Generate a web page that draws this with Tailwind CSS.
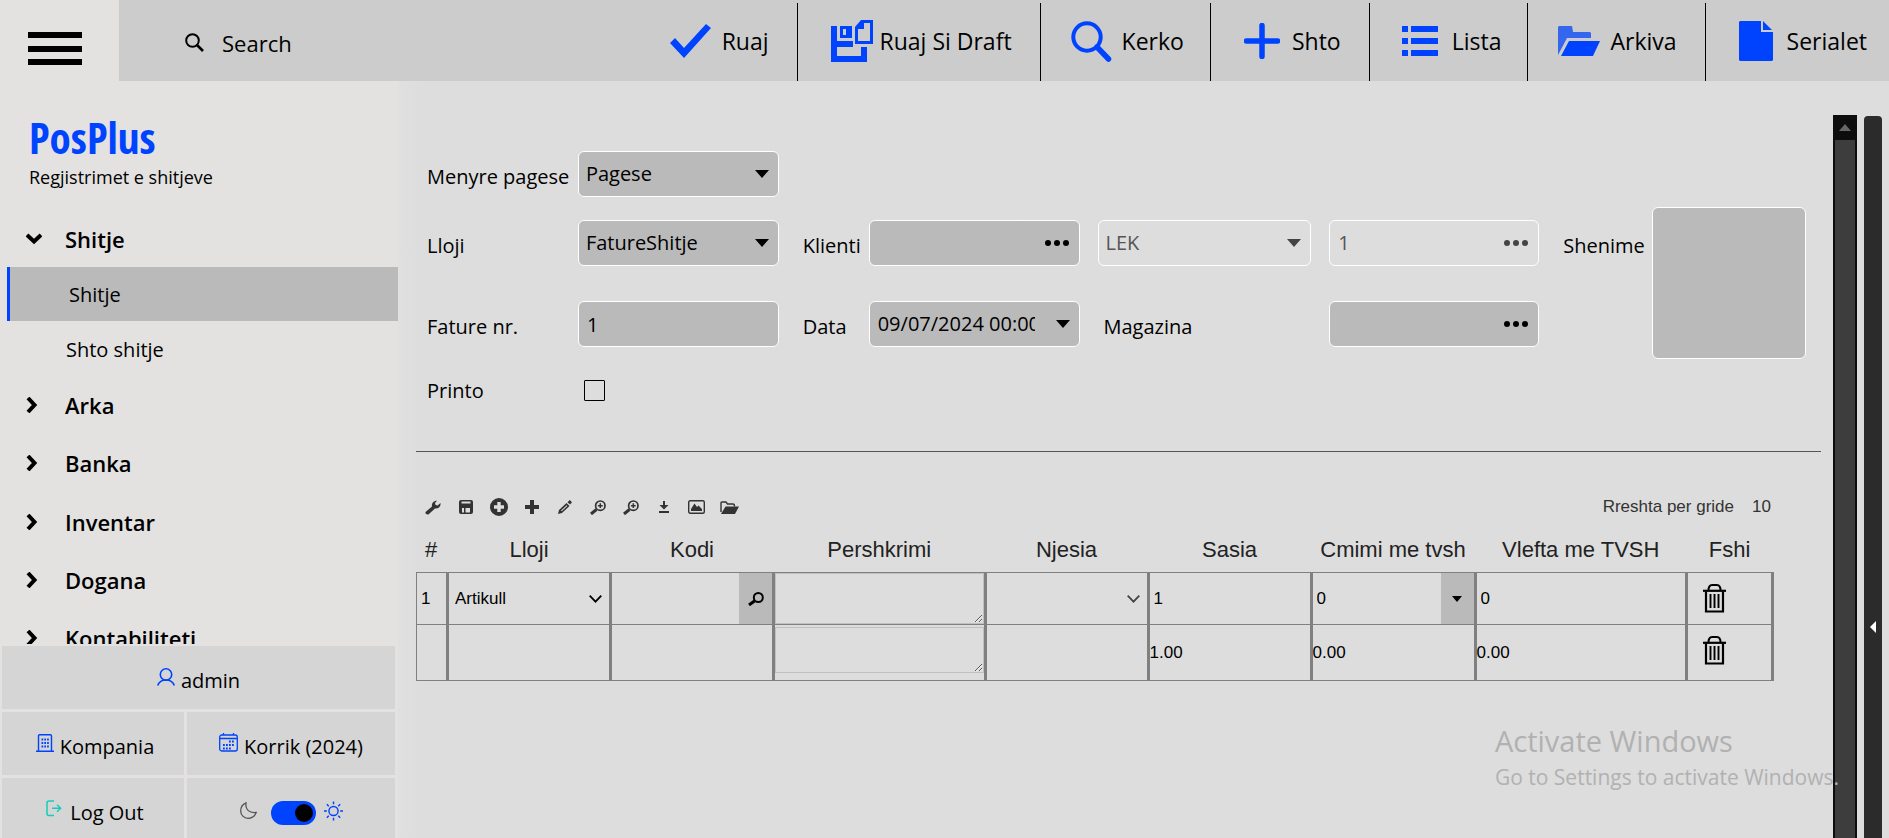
<!DOCTYPE html>
<html lang="sq">
<head>
    <meta charset="UTF-8">
    <meta name="viewport" content="width=device-width, initial-scale=1.0">
    <title>PosPlus - Regjistrimet e shitjeve</title>
    <script src="https://cdn.jsdelivr.net/npm/@tailwindcss/browser@4"></script>
</head>
<body class="h-screen overflow-hidden flex flex-col bg-[#dddddd] text-black text-[20px] leading-7 font-['Open_Sans','Noto_Sans',sans-serif]">

    <!-- Header -->
    <header class="h-[81px] shrink-0 flex bg-[#cccccc]">
        <button type="button" aria-label="Menu" class="w-[119px] bg-[#e3e2e0] pl-7 pt-4">
            <svg width="54" height="34" viewBox="0 0 54 34"><path d="M0 0h54v6H0zM0 14h54v6H0zM0 27h54v6H0z"/></svg>
        </button>
        <label class="flex items-center gap-[18px] pl-[66px] pt-1">
            <svg width="19" height="19" viewBox="0 0 19 19" fill="none" stroke="#000" stroke-width="2"><circle cx="7.5" cy="7.5" r="6.3"/><path d="M12 12l6 6" stroke-width="2.6"/></svg>
            <input type="search" placeholder="Search" class="w-40 bg-transparent text-[22px] outline-none placeholder:text-black">
        </label>
        <nav class="ml-auto flex pt-[3px] text-[23px]">
            <button type="button" class="flex items-center gap-2.5 pl-8 pr-7 pb-0.5">
                <svg width="42" height="34" viewBox="0 0 42 34"><path d="M0 19l5-5 9 10L36 0l5 4-27 30z" fill="#0043ff"/></svg>
                Ruaj
            </button>
            <button type="button" class="flex items-center gap-1.5 border-l border-black pl-[33px] pr-7 pb-0.5">
                <svg width="43" height="43" viewBox="0 0 43 43" fill="#0043ff"><path fill-rule="evenodd" d="M0 6h6v15h16v6H6v9h24v-9h6v15H0zM9 6h12v12H9zM12 9v6h3V9z"/><path fill-rule="evenodd" d="M30 0h12v24H24V7zM33 3v6h-6v12h12V3z"/></svg>
                Ruaj Si Draft
            </button>
            <button type="button" class="flex items-center gap-2.5 border-l border-black pl-[30px] pr-[26px] pb-0.5">
                <svg width="41" height="41" viewBox="0 0 41 41" fill="none" stroke="#0043ff"><circle cx="16" cy="16" r="13.7" stroke-width="4"/><path d="M26 26l11.500 12" stroke-width="5.500" stroke-linecap="round"/></svg>
                Kerko
            </button>
            <button type="button" class="flex items-center gap-3 border-l border-black pl-[33px] pr-7 pb-0.5">
                <svg width="36" height="36" viewBox="0 0 36 36"><path d="M18 2.500v31M2.500 18h31" stroke="#0043ff" stroke-width="5.500" stroke-linecap="round"/></svg>
                Shto
            </button>
            <button type="button" class="flex items-center gap-3.5 border-l border-black pl-8 pr-[26px] pb-0.5">
                <svg width="36" height="30" viewBox="0 0 36 30" fill="#0043ff"><path d="M0 0h6v6H0zM9 0h27v6H9zM0 12h6v6H0zM9 12h27v6H9zM0 24h6v6H0zM9 24h27v6H9z"/></svg>
                Lista
            </button>
            <button type="button" class="flex items-center gap-2.5 border-l border-black pl-[30px] pr-7 pb-0.5">
                <svg width="42" height="30" viewBox="0 0 42 30"><path d="M1 0h13l1 6h17l1 1v5H9L0 29V1z" fill="#3566ee"/><path d="M11 15h31l-7 15H3z" fill="#0043ff"/></svg>
                Arkiva
            </button>
            <button type="button" class="flex items-center gap-3.5 border-l border-black pl-[33px] pr-[22px] pb-0.5">
                <svg width="34" height="40" viewBox="0 0 34 40" fill="#0043ff"><path d="M1 0h21v11h12v28l-1 1H1l-1-1V1zM24 0l9 9h-9z"/></svg>
                Serialet
            </button>
        </nav>
    </header>

    <div class="flex flex-1 min-h-0">

        <!-- Sidebar -->
        <aside class="w-[398px] shrink-0 flex flex-col bg-[#e3e2e0]">
            <div class="pl-[29px] pt-7">
                <h1 class="text-[43px] leading-[58px] font-bold text-[#0043ff] font-['Open_Sans_Condensed','Liberation_Sans_Narrow','Open_Sans',sans-serif]">PosPlus</h1>
                <p class="text-[18px] leading-5">Regjistrimet e shitjeve</p>
            </div>
            <nav class="flex-1 min-h-0 overflow-hidden mt-6 mb-0.5">
                <a href="#" class="flex items-center h-[56px] pl-[26px] text-[22px] font-semibold"><svg class="mr-[23px]" width="16" height="12" viewBox="0 0 16 12" fill="none" stroke="#000" stroke-width="4"><path d="M1 2l7 6.500L15 2"/></svg>Shitje</a>
                <a href="#" class="flex items-center h-[54px] ml-[7px] border-l-[3px] border-[#0043ff] bg-[#bababa] pl-[59px] pt-0.5">Shitje</a>
                <a href="#" class="flex items-center h-[55px] pl-[66px] pt-0.5">Shto shitje</a>
                <a href="#" class="flex items-center h-[58px] pl-[26px] text-[22px] font-semibold"><svg class="mr-[27px]" width="12" height="16" viewBox="0 0 12 16" fill="none" stroke="#000" stroke-width="4"><path d="M2 1l6.500 7L2 15"/></svg>Arka</a>
                <a href="#" class="flex items-center h-[58px] pl-[26px] text-[22px] font-semibold"><svg class="mr-[27px]" width="12" height="16" viewBox="0 0 12 16" fill="none" stroke="#000" stroke-width="4"><path d="M2 1l6.500 7L2 15"/></svg>Banka</a>
                <a href="#" class="flex items-center h-[59px] pl-[26px] text-[22px] font-semibold"><svg class="mr-[27px]" width="12" height="16" viewBox="0 0 12 16" fill="none" stroke="#000" stroke-width="4"><path d="M2 1l6.500 7L2 15"/></svg>Inventar</a>
                <a href="#" class="flex items-center h-[58px] pl-[26px] text-[22px] font-semibold"><svg class="mr-[27px]" width="12" height="16" viewBox="0 0 12 16" fill="none" stroke="#000" stroke-width="4"><path d="M2 1l6.500 7L2 15"/></svg>Dogana</a>
                <a href="#" class="flex items-center h-[58px] pl-[26px] text-[22px] font-semibold"><svg class="mr-[27px]" width="12" height="16" viewBox="0 0 12 16" fill="none" stroke="#000" stroke-width="4"><path d="M2 1l6.500 7L2 15"/></svg>Kontabiliteti</a>
            </nav>
            <div class="h-[192px] shrink-0 overflow-hidden grid grid-cols-[182fr_208fr] auto-rows-[63px] gap-[3px] pl-0.5 pr-[3px]">
                <button type="button" class="col-span-2 flex items-center justify-center gap-1.5 bg-[#d5d5d5] pt-1.5">
                    <svg class="mb-2" width="18" height="18" viewBox="0 0 18 18" fill="none" stroke="#0043ff" stroke-width="1.600"><circle cx="9" cy="6.500" r="5.700"/><path d="M.7 17.500C2 14 5 12 9 12s7 2 8.300 5.500"/></svg>
                    admin
                </button>
                <button type="button" class="flex items-center justify-center gap-1.5 bg-[#d5d5d5] pt-1.5 pl-1">
                    <svg class="mb-2" width="18" height="18" viewBox="0 0 18 18" fill="none" stroke="#0043ff" stroke-width="1.400"><path d="M0 17.200h18M2.500 17V2q0-1.200 1.200-1.200h10.600q1.200 0 1.200 1.200v15"/><path d="M5.500 5.500h8M5.500 9h8M5.500 12.500h8" stroke-width="1.800" stroke-dasharray="1.700 1.100"/></svg>
                    Kompania
                </button>
                <button type="button" class="flex items-center justify-center gap-1.5 bg-[#d5d5d5] pt-1.5">
                    <svg class="mb-2" width="19" height="19" viewBox="0 0 19 19" fill="none" stroke="#0043ff" stroke-width="1.300"><rect x=".7" y="2" width="17.600" height="16" rx="2"/><path d="M1 5.500h17M4.500 0v2M14.500 0v2"/><path d="M10 8.500h6M4 12h12M4 15.500h8.500" stroke-width="1.800" stroke-dasharray="1.800 1.200"/></svg>
                    Korrik (2024)
                </button>
                <button type="button" class="flex items-center justify-center gap-2 bg-[#d5d5d5] pt-1.5 pl-1">
                    <svg class="mb-2" width="16" height="17" viewBox="0 0 16 17" fill="none" stroke="#14cdb8" stroke-width="1.500"><path d="M8 1H3Q1 1 1 3v10.500q0 2 2 2h5M6 8.300h8.500M11 4.800l3.600 3.500L11 11.800"/></svg>
                    Log Out
                </button>
                <label class="flex items-center justify-center gap-2 bg-[#d5d5d5] pt-1.5">
                    <svg class="mb-1 mr-1.5" width="17" height="17" viewBox="0 0 17 17" fill="none" stroke="#555" stroke-width="1.300"><path d="M6 .8C5 7 9 11.500 16.200 10.500 14.500 15 11 16.300 8 16.300 4 16.300.7 13 .7 9 .7 5 3 2 6 .8z"/></svg>
                    <input type="checkbox" checked aria-label="Tema" class="appearance-none w-[45px] h-6 rounded-full bg-[#0043ff] before:block before:size-[18px] before:rounded-full before:bg-black before:mt-[3px] before:ml-[24px]">
                    <svg class="mb-1" width="19" height="20" viewBox="0 0 20 20" fill="none" stroke="#0043ff" stroke-width="1.500"><circle cx="10" cy="10" r="4.800"/><path d="M10 0v3M10 17v3M0 10h3M17 10h3M3 3l2 2M15 15l2 2M3 17l2-2M15 5l2-2"/></svg>
                </label>
            </div>
        </aside>

        <!-- Content -->
        <main class="flex-1 min-w-0 pl-[18px] pt-[70px] bg-linear-to-r from-[#e0e0e0] to-[#dddddd] to-[24px]">
            <form class="grid grid-cols-[151fr_201fr_90fr_211fr_18fr_214fr_18fr_210fr_113fr_154fr] grid-rows-[46px_72px_70px_43px] gap-y-2.5 items-center pl-[11px] pr-[15px] whitespace-nowrap *:min-w-0">
                <label for="menyra" class="pt-1.5">Menyre pagese</label>
                <div class="relative">
                    <select id="menyra" class="appearance-none w-full h-[46px] rounded-md border border-white bg-[#bababa] pl-[7px]"><option>Pagese</option></select>
                    <svg class="absolute right-2.5 top-[19px] pointer-events-none" width="14" height="8" viewBox="0 0 14 8"><path d="M0 0h14L7 8z"/></svg>
                </div>

                <label for="lloji" class="row-start-2 col-start-1 pt-1.5">Lloji</label>
                <div class="row-start-2 col-start-2 relative">
                    <select id="lloji" class="appearance-none w-full h-[46px] rounded-md border border-white bg-[#bababa] pl-[7px]"><option>FatureShitje</option></select>
                    <svg class="absolute right-2.5 top-[19px] pointer-events-none" width="14" height="8" viewBox="0 0 14 8"><path d="M0 0h14L7 8z"/></svg>
                </div>
                <label for="klienti" class="row-start-2 col-start-3 pl-6 pt-1.5">Klienti</label>
                <div class="row-start-2 col-start-4 flex h-[46px] rounded-md border border-white bg-[#bababa]">
                    <input id="klienti" type="text" class="flex-1 min-w-0 pl-2 outline-none">
                    <button type="button" aria-label="Zgjidh klientin" class="w-11"><svg class="mx-auto" width="26" height="6" viewBox="0 0 26 6"><circle cx="4" cy="3" r="3"/><circle cx="13" cy="3" r="3"/><circle cx="22" cy="3" r="3"/></svg></button>
                </div>
                <div class="row-start-2 col-start-6 relative">
                    <select aria-label="Monedha" disabled class="appearance-none w-full h-[46px] rounded-md border border-white pl-[7px] text-[#555]"><option>LEK</option></select>
                    <svg class="absolute right-2.5 top-[19px] pointer-events-none" width="14" height="8" viewBox="0 0 14 8" fill="#444"><path d="M0 0h14L7 8z"/></svg>
                </div>
                <div class="row-start-2 col-start-8 flex h-[46px] rounded-md border border-white">
                    <input aria-label="Kursi" type="text" value="1" disabled class="flex-1 min-w-0 pl-2 text-[#555]">
                    <button type="button" disabled aria-label="Zgjidh kursin" class="w-11"><svg class="mx-auto" width="26" height="6" viewBox="0 0 26 6" fill="#444"><circle cx="4" cy="3" r="3"/><circle cx="13" cy="3" r="3"/><circle cx="22" cy="3" r="3"/></svg></button>
                </div>
                <label for="shenime" class="row-start-2 col-start-9 pl-6 pt-1.5">Shenime</label>
                <textarea id="shenime" class="row-start-2 row-span-2 col-start-10 w-full h-full resize-none rounded-md border border-white bg-[#bababa] p-2"></textarea>

                <label for="fatura" class="row-start-3 col-start-1 pt-1.5">Fature nr.</label>
                <input id="fatura" type="text" value="1" class="row-start-3 col-start-2 w-full h-[46px] rounded-md border border-white bg-[#bababa] pl-2">
                <label for="data" class="row-start-3 col-start-3 pl-6 pt-1.5">Data</label>
                <div class="row-start-3 col-start-4 flex h-[46px] rounded-md border border-white bg-[#bababa]">
                    <input id="data" type="text" value="09/07/2024 00:00" class="flex-1 min-w-0 ml-2 outline-none">
                    <button type="button" aria-label="Hap kalendarin" class="w-11 pl-3"><svg class="mx-auto" width="14" height="8" viewBox="0 0 14 8"><path d="M0 0h14L7 8z"/></svg></button>
                </div>
                <label for="magazina" class="row-start-3 col-start-6 pl-1.5 pt-1.5">Magazina</label>
                <div class="row-start-3 col-start-8 flex h-[46px] rounded-md border border-white bg-[#bababa]">
                    <input id="magazina" type="text" class="flex-1 min-w-0 pl-2 outline-none">
                    <button type="button" aria-label="Zgjidh magazinen" class="w-11"><svg class="mx-auto" width="26" height="6" viewBox="0 0 26 6"><circle cx="4" cy="3" r="3"/><circle cx="13" cy="3" r="3"/><circle cx="22" cy="3" r="3"/></svg></button>
                </div>

                <label for="printo" class="row-start-4 col-start-1">Printo</label>
                <input id="printo" type="checkbox" class="row-start-4 col-start-2 appearance-none size-[21px] ml-1.5 rounded-[1px] border border-black">
            </form>

            <hr class="mt-[39px] border-[#555]">

            <!-- Grid -->
            <section class="pr-[47px] pt-10 font-['Liberation_Sans',Arial,sans-serif]">
                <div class="flex items-center h-[30px] text-[#333]">
                    <button type="button" aria-label="Cilesimet" class="w-[33px]"><svg class="mx-auto" width="16" height="16" viewBox="0 0 16 16" fill="currentColor"><path d="M.8 12.800L7 7.500C6.300 4.500 8.500 1.500 12 1.700L10 4l.6 2 2 .6L15.500 4c.6 3.500-2.200 6-5.500 5.400l-6.300 5.800C2 16-.5 14.500.8 12.800z"/></svg></button>
                    <button type="button" aria-label="Ruaj" class="w-[33px]"><svg class="mx-auto" width="14" height="14" viewBox="0 0 14 14" fill="currentColor"><path fill-rule="evenodd" d="M2 0h10q2 0 2 2v10q0 2-2 2H2q-2 0-2-2V2q0-2 2-2zM2.500 1.500v2h9v-2zM3 8v4.500h2V8zM6.500 8v4.500H11V8z"/></svg></button>
                    <button type="button" aria-label="Shto rresht" class="w-[33px]"><svg class="mx-auto" width="18" height="18" viewBox="0 0 18 18" fill="currentColor"><path fill-rule="evenodd" d="M9 0a9 9 0 100 18A9 9 0 009 0zM7.300 4h3.400v3.300H14v3.400h-3.300V14H7.300v-3.300H4V7.300h3.300z"/></svg></button>
                    <button type="button" aria-label="Shto" class="w-[33px]"><svg class="mx-auto" width="14" height="14" viewBox="0 0 14 14" fill="currentColor"><path d="M5 0h4v5h5v4H9v5H5V9H0V5h5z"/></svg></button>
                    <button type="button" aria-label="Modifiko" class="w-[33px]"><svg class="mx-auto" width="14" height="14" viewBox="0 0 14 14" fill="currentColor"><path fill-rule="evenodd" d="M0 14l1-4 7.500-7 3 3L4 13zM3 10.500l.7.7 5.600-5.300-.6-.7z"/><path d="M9.500 2.200L11.700 0 14 2.300l-2 2.300z"/></svg></button>
                    <button type="button" aria-label="Kerko" class="w-[33px]"><svg class="mx-auto" width="16" height="15" viewBox="0 0 16 15" fill="none" stroke="currentColor"><circle cx="10.300" cy="5.700" r="4.700" stroke-width="1.700"/><path d="M6.500 9.500L1 14" stroke-width="3"/><path d="M10.300 3.300v4.800M7.900 5.700h4.800" stroke-width="1.500"/></svg></button>
                    <button type="button" aria-label="Kerko te gjitha" class="w-[33px]"><svg class="mx-auto" width="16" height="15" viewBox="0 0 16 15" fill="none" stroke="currentColor"><circle cx="10.300" cy="5.700" r="4.700" stroke-width="1.700"/><path d="M6.500 9.500L1 14" stroke-width="3"/><path d="M10.300 3.300v4.800M7.900 5.700h4.800" stroke-width="1.500"/></svg></button>
                    <button type="button" aria-label="Shkarko" class="w-[33px]"><svg class="mx-auto" width="10" height="12" viewBox="0 0 10 12" fill="currentColor"><path d="M4 0h2v4h3.500L5 8.500.5 4H4zM0 10h10v2H0z"/></svg></button>
                    <button type="button" aria-label="Imazh" class="w-[33px]"><svg class="mx-auto" width="17" height="14" viewBox="0 0 17 14" fill="currentColor"><rect x=".7" y=".7" width="15.600" height="12.600" rx="1.500" fill="none" stroke="currentColor" stroke-width="1.400"/><path d="M3 11V9l3.500-5.500L9 7l1.500-1.500L14 9v2z"/></svg></button>
                    <button type="button" aria-label="Hap" class="w-[33px]"><svg class="mx-auto" width="19" height="13" viewBox="0 0 19 13" fill="currentColor"><path d="M1 11V2q0-1 1-1h4l1.500 2H13q1.500 0 1.500 2.500" fill="none" stroke="currentColor" stroke-width="1.400"/><path d="M5.500 5.500H19L15 13H1z"/></svg></button>
                    <label for="rreshta" class="ml-auto text-[17px]">Rreshta per gride</label>
                    <input id="rreshta" type="text" value="10" class="w-[22px] ml-[18px] text-[17px] outline-none">
                </div>
                <table class="w-full table-fixed border-separate border-spacing-0 text-[17px] leading-6">
                    <colgroup>
                        <col class="w-[33px]"><col class="w-[163px]"><col class="w-[163px]"><col><col class="w-[163px]"><col class="w-[163px]"><col class="w-[164px]"><col><col class="w-[86px]">
                    </colgroup>
                    <thead class="text-[22px] text-[#222]">
                        <tr class="h-[50px] *:p-0 *:pt-[5px] *:pr-[3px] *:font-normal">
                            <th>#</th>
                            <th>Lloji</th>
                            <th>Kodi</th>
                            <th>Pershkrimi</th>
                            <th>Njesia</th>
                            <th>Sasia</th>
                            <th>Cmimi me tvsh</th>
                            <th>Vlefta me TVSH</th>
                            <th>Fshi</th>
                        </tr>
                    </thead>
                    <tbody>
                        <tr class="h-[53px] *:border-[#808080] *:border-y *:border-r-[3px] *:p-0">
                            <td class="border-l"><span class="pl-1">1</span></td>
                            <td>
                                <div class="relative">
                                    <select aria-label="Lloji" class="appearance-none w-full h-[51px] pl-1.5"><option>Artikull</option></select>
                                    <svg class="absolute right-[7px] top-[22px] pointer-events-none" width="13" height="8" viewBox="0 0 13 8" fill="none" stroke="#000" stroke-width="1.800"><path d="M.7.7l5.800 6 5.800-6"/></svg>
                                </div>
                            </td>
                            <td>
                                <div class="flex h-[51px]">
                                    <input aria-label="Kodi" type="text" class="flex-1 min-w-0 pl-1 outline-none">
                                    <button type="button" aria-label="Kerko kodin" class="w-[33px] bg-[#bababa]"><svg class="mx-auto" width="16" height="14" viewBox="0 0 16 14" fill="none" stroke="#000"><circle cx="10.300" cy="5.500" r="4.500" stroke-width="2"/><path d="M6.500 9L1 13" stroke-width="3"/></svg></button>
                                </div>
                            </td>
                            <td><textarea aria-label="Pershkrimi" class="block w-full h-[51px] resize border border-[#c0c0c0] outline-none"></textarea></td>
                            <td>
                                <div class="relative">
                                    <select aria-label="Njesia" class="appearance-none w-full h-[51px] pl-1.5"><option></option></select>
                                    <svg class="absolute right-[7px] top-[22px] pointer-events-none" width="13" height="8" viewBox="0 0 13 8" fill="none" stroke="#444" stroke-width="1.800"><path d="M.7.7l5.800 6 5.800-6"/></svg>
                                </div>
                            </td>
                            <td><input aria-label="Sasia" type="text" value="1" class="block w-full h-[51px] pl-1 outline-none"></td>
                            <td>
                                <div class="flex h-[51px]">
                                    <input aria-label="Cmimi me tvsh" type="text" value="0" class="flex-1 min-w-0 pl-1 outline-none">
                                    <button type="button" aria-label="Zgjidh cmimin" class="w-[33px] bg-[#bababa]"><svg class="mx-auto" width="10" height="6" viewBox="0 0 10 6"><path d="M0 0h10L5 6z"/></svg></button>
                                </div>
                            </td>
                            <td><input aria-label="Vlefta me TVSH" type="text" value="0" class="block w-full h-[51px] pl-1 outline-none"></td>
                            <td>
                                <button type="button" aria-label="Fshi rreshtin" class="block ml-[15px]"><svg width="23" height="29" viewBox="0 0 23 29" fill="none" stroke="#000"><path d="M3 7.500V27.500h17V7.500" stroke-width="2.200"/><path d="M0 6.800h23" stroke-width="2.200"/><path d="M5.500 6.500C5.500 2.500 7 1 9 1h5c2 0 3.500 1.500 3.500 5.500" stroke-width="2"/><path d="M7.500 10v14M11.500 10v14M15.500 10v14" stroke-width="1.900"/></svg></button>
                            </td>
                        </tr>
                        <tr class="h-[56px] *:border-[#808080] *:border-b *:border-r-[3px] *:p-0">
                            <td class="border-l"></td>
                            <td></td>
                            <td></td>
                            <td class="align-top"><textarea aria-label="Pershkrimi total" readonly class="block w-full h-[46px] mt-0.5 resize border border-[#c0c0c0] outline-none"></textarea></td>
                            <td></td>
                            <td>1.00</td>
                            <td>0.00</td>
                            <td>0.00</td>
                            <td class="align-top">
                                <button type="button" aria-label="Fshi totalin" class="block ml-[15px] mt-[11px]"><svg width="23" height="29" viewBox="0 0 23 29" fill="none" stroke="#000"><path d="M3 7.500V27.500h17V7.500" stroke-width="2.200"/><path d="M0 6.800h23" stroke-width="2.200"/><path d="M5.500 6.500C5.500 2.500 7 1 9 1h5c2 0 3.500 1.500 3.500 5.500" stroke-width="2"/><path d="M7.500 10v14M11.500 10v14M15.500 10v14" stroke-width="1.900"/></svg></button>
                            </td>
                        </tr>
                    </tbody>
                </table>
            </section>
        </main>

        <!-- Scrollbar -->
        <div class="w-6 shrink-0 mt-[34px] ml-3 flex flex-col bg-[#0d0d0d] px-0.5">
            <div class="h-[25px] flex items-center justify-center"><svg width="12" height="7" viewBox="0 0 12 7" fill="#666"><path d="M0 7h12L6 0z"/></svg></div>
            <div class="flex-1 bg-[#3d3d3d]"></div>
        </div>

        <!-- Right panel toggle -->
        <button type="button" aria-label="Hap panelin" class="w-[18px] shrink-0 mt-[35px] ml-[7px] mr-[7px] rounded-t bg-[#2b2b2b] pt-[300px]">
            <svg class="mx-auto" width="6" height="12" viewBox="0 0 6 12" fill="#fff"><path d="M6 0v12L0 6z"/></svg>
        </button>
    </div>

    <!-- Watermark -->
    <div class="absolute right-[50px] bottom-[43px] pointer-events-none text-[#b1b1b1]">
        <p class="text-[29px] leading-9">Activate Windows</p>
        <p class="text-[21px] leading-9">Go to Settings to activate Windows.</p>
    </div>
</body>
</html>
